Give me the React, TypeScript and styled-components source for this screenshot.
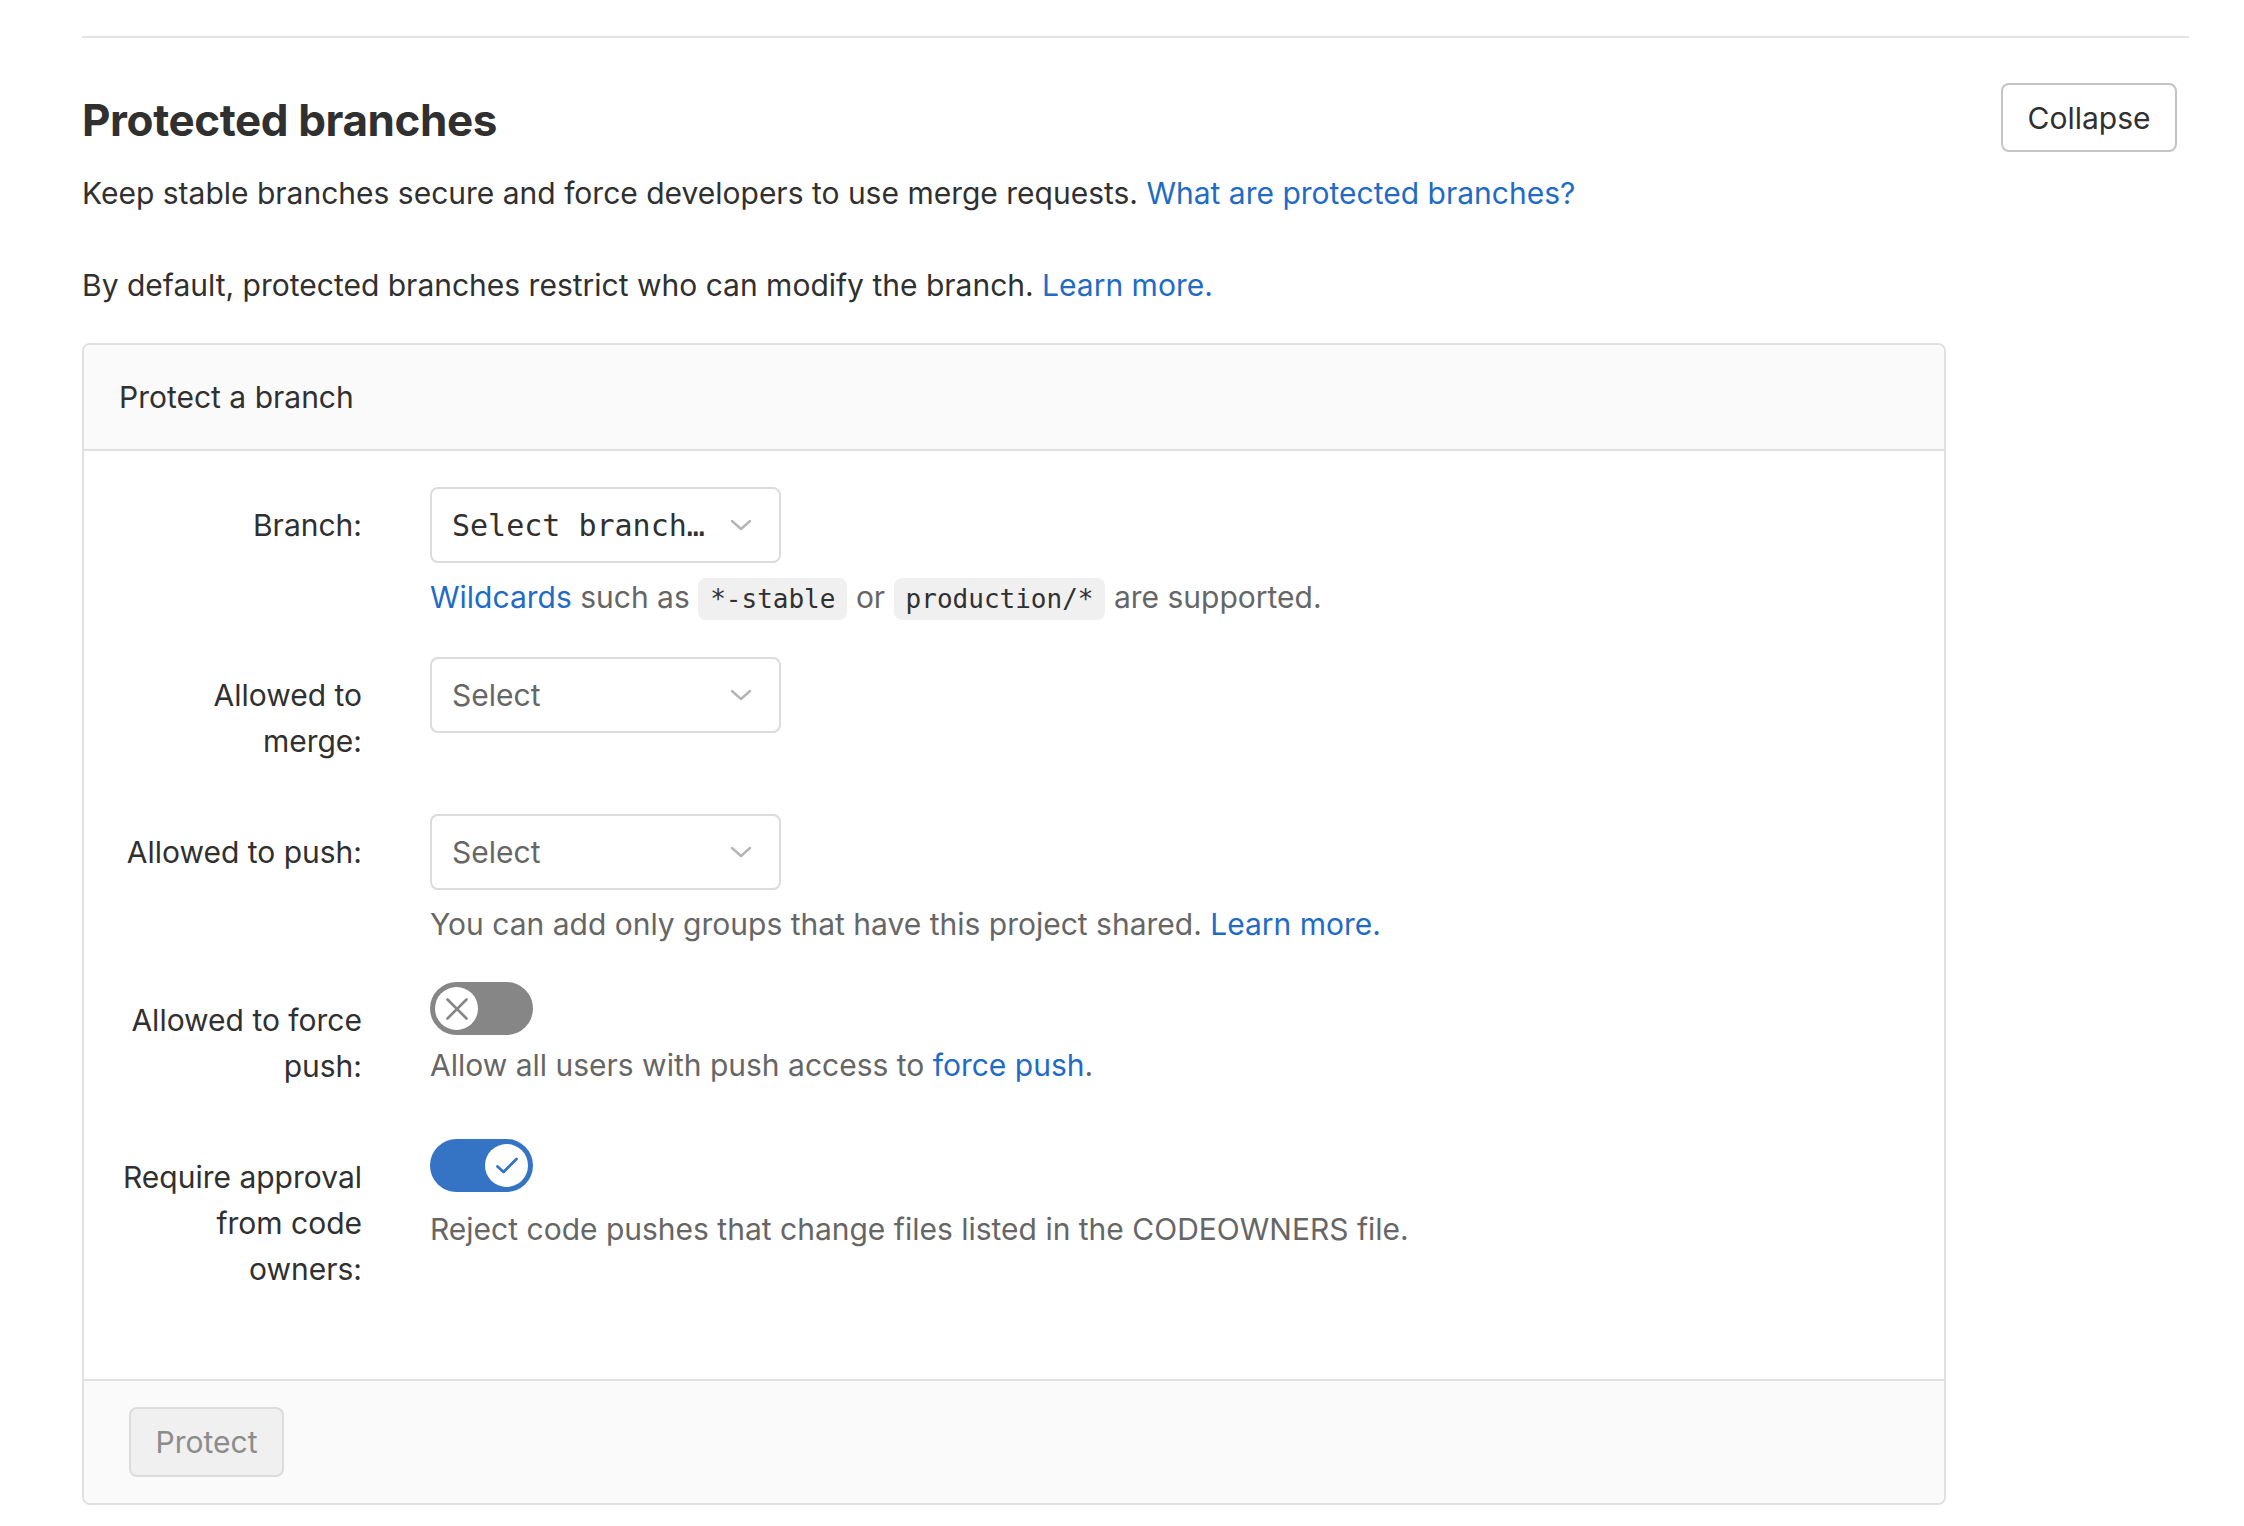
import type { ReactNode } from "react";
import styled, { createGlobalStyle } from "styled-components";

const GlobalStyle = createGlobalStyle`
  body {
    margin: 0;
    background: #ffffff;
    font-family: Inter, "Liberation Sans", Arial, sans-serif;
    color: #303030;
  }
`;

interface FieldRow {
  label: string;
  kind: "branch" | "select" | "toggle";
  on?: boolean;
  help?: ReactNode;
}

const Chevron = () => (
  <svg width="22" height="12" viewBox="0 0 22 12" fill="none">
    <path d="M2 2l9 8 9-8" stroke="#b5b5b5" strokeWidth="2.4" strokeLinecap="round" strokeLinejoin="round" />
  </svg>
);

const Toggle = ({ on }: { on: boolean }) => (
  <ToggleTrack $on={on}>
    <ToggleKnob>
      {on ? (
        <svg width="26" height="26" viewBox="0 0 26 26" fill="none">
          <path d="M3.5 13.5l6 5.5L22.5 6" stroke="#3574c4" strokeWidth="2.8" strokeLinecap="round" strokeLinejoin="round" />
        </svg>
      ) : (
        <svg width="24" height="24" viewBox="0 0 24 24" fill="none">
          <path d="M2.5 2.5l19 19M21.5 2.5l-19 19" stroke="#868686" strokeWidth="2.6" strokeLinecap="round" />
        </svg>
      )}
    </ToggleKnob>
  </ToggleTrack>
);

const App = () => {
  const rows: FieldRow[] = [
    {
      label: "Branch:",
      kind: "branch",
      help: (
        <>
          <Link href="#">Wildcards</Link> such as <Code>*-stable</Code> or{" "}
          <Code>production/*</Code> are supported.
        </>
      ),
    },
    { label: "Allowed to merge:", kind: "select" },
    {
      label: "Allowed to push:",
      kind: "select",
      help: (
        <>
          You can add only groups that have this project shared.{" "}
          <Link href="#">Learn more.</Link>
        </>
      ),
    },
    {
      label: "Allowed to force push:",
      kind: "toggle",
      on: false,
      help: (
        <>
          Allow all users with push access to <Link href="#">force push</Link>.
        </>
      ),
    },
    {
      label: "Require approval from code owners:",
      kind: "toggle",
      on: true,
      help: <>Reject code pushes that change files listed in the CODEOWNERS file.</>,
    },
  ];

  return (
    <Page>
      <GlobalStyle />
      <Section>
        <SectionHeader>
          <Intro>
            <Title>Protected branches</Title>
            <Description>
              Keep stable branches secure and force developers to use merge requests.{" "}
              <Link href="#">What are protected branches?</Link>
            </Description>
            <Description>
              By default, protected branches restrict who can modify the branch.{" "}
              <Link href="#">Learn more.</Link>
            </Description>
          </Intro>
          <CollapseButton>Collapse</CollapseButton>
        </SectionHeader>

        <Card>
          <CardHeader>Protect a branch</CardHeader>
          <CardBody>
            {rows.map((row) => (
              <Row key={row.label}>
                <Label>{row.label}</Label>
                <Control>
                  {row.kind === "branch" && (
                    <SelectBox>
                      <MonoValue>Select branch…</MonoValue>
                      <Chevron />
                    </SelectBox>
                  )}
                  {row.kind === "select" && (
                    <SelectBox>
                      <Placeholder>Select</Placeholder>
                      <Chevron />
                    </SelectBox>
                  )}
                  {row.kind === "toggle" && <Toggle on={!!row.on} />}
                  {row.help && <Help $gap={row.kind === "toggle" ? (row.on ? 14 : 7) : 11}>{row.help}</Help>}
                </Control>
              </Row>
            ))}
          </CardBody>
          <CardFooter>
            <ProtectButton disabled>Protect</ProtectButton>
          </CardFooter>
        </Card>
      </Section>
    </Page>
  );
};

export default App;

const Page = styled.div`
  padding: 36px 55px 24px 82px;
`;

const Section = styled.section`
  border-top: 2px solid #e3e3e3;
`;

const SectionHeader = styled.div`
  display: flex;
  justify-content: space-between;
  align-items: flex-start;
`;

const Intro = styled.div`
  padding-top: 55px;
`;

const Title = styled.h2`
  margin: 0;
  font-size: 44px;
  line-height: 54px;
  font-weight: 700;
  letter-spacing: -0.4px;
  color: #303030;
`;

const Description = styled.p`
  margin: 23px 0 0;
  font-size: 30px;
  line-height: 46px;
  color: #303030;

  & + & {
    margin-top: 46px;
  }
`;

const Link = styled.a`
  color: #1f6bc6;
  text-decoration: none;
`;

const CollapseButton = styled.button`
  margin: 45px 12px 0 0;
  width: 176px;
  height: 69px;
  border: 2px solid #c4c4c4;
  border-radius: 8px;
  background: #ffffff;
  font-family: Inter, "Liberation Sans", Arial, sans-serif;
  font-size: 30px;
  color: #303030;
`;

const Card = styled.div`
  margin-top: 35px;
  width: 1864px;
  box-sizing: border-box;
  border: 2px solid #e0e0e0;
  border-radius: 8px;
  overflow: hidden;
`;

const CardHeader = styled.div`
  padding: 29px 35px 28px;
  background: #fafafa;
  border-bottom: 2px solid #e0e0e0;
  font-size: 30px;
  line-height: 47px;
  color: #303030;
`;

const CardBody = styled.div`
  padding: 36px 0 37px;
  background: #ffffff;
`;

const Row = styled.div`
  display: grid;
  grid-template-columns: 278px 1fr;
  column-gap: 68px;
  margin-bottom: 35px;
`;

const Label = styled.div`
  padding: 15px 0 15px 33px;
  text-align: right;
  font-size: 30px;
  line-height: 46px;
  color: #303030;
`;

const Control = styled.div`
  display: flex;
  flex-direction: column;
  align-items: flex-start;
`;

const SelectBox = styled.div`
  width: 351px;
  height: 76px;
  box-sizing: border-box;
  display: flex;
  align-items: center;
  justify-content: space-between;
  padding: 0 27px 0 20px;
  border: 2px solid #dcdcdc;
  border-radius: 8px;
  background: #ffffff;
`;

const MonoValue = styled.span`
  font-family: "DejaVu Sans Mono", "Liberation Mono", monospace;
  font-size: 30px;
  color: #303030;
`;

const Placeholder = styled.span`
  font-size: 30px;
  color: #666666;
`;

const Help = styled.div<{ $gap: number }>`
  margin-top: ${({ $gap }) => $gap}px;
  font-size: 30px;
  line-height: 46px;
  color: #666666;
`;

const Code = styled.code`
  font-family: "DejaVu Sans Mono", "Liberation Mono", monospace;
  font-size: 26px;
  padding: 6px 12px;
  border-radius: 8px;
  background: #f0f0f0;
  color: #303030;
`;

const ToggleTrack = styled.div<{ $on: boolean }>`
  width: 103px;
  height: 53px;
  box-sizing: border-box;
  padding: 5px;
  border-radius: 27px;
  display: flex;
  justify-content: ${({ $on }) => ($on ? "flex-end" : "flex-start")};
  align-items: center;
  background: ${({ $on }) => ($on ? "#3574c4" : "#868686")};
`;

const ToggleKnob = styled.div`
  width: 43px;
  height: 43px;
  border-radius: 50%;
  background: #ffffff;
  display: flex;
  align-items: center;
  justify-content: center;
`;

const CardFooter = styled.div`
  padding: 26px 45px;
  background: #fafafa;
  border-top: 2px solid #e0e0e0;
`;

const ProtectButton = styled.button`
  width: 155px;
  height: 70px;
  border: 2px solid #dcdcdc;
  border-radius: 8px;
  background: #f0f0f0;
  font-family: Inter, "Liberation Sans", Arial, sans-serif;
  font-size: 30px;
  color: #8c8c8c;
`;
